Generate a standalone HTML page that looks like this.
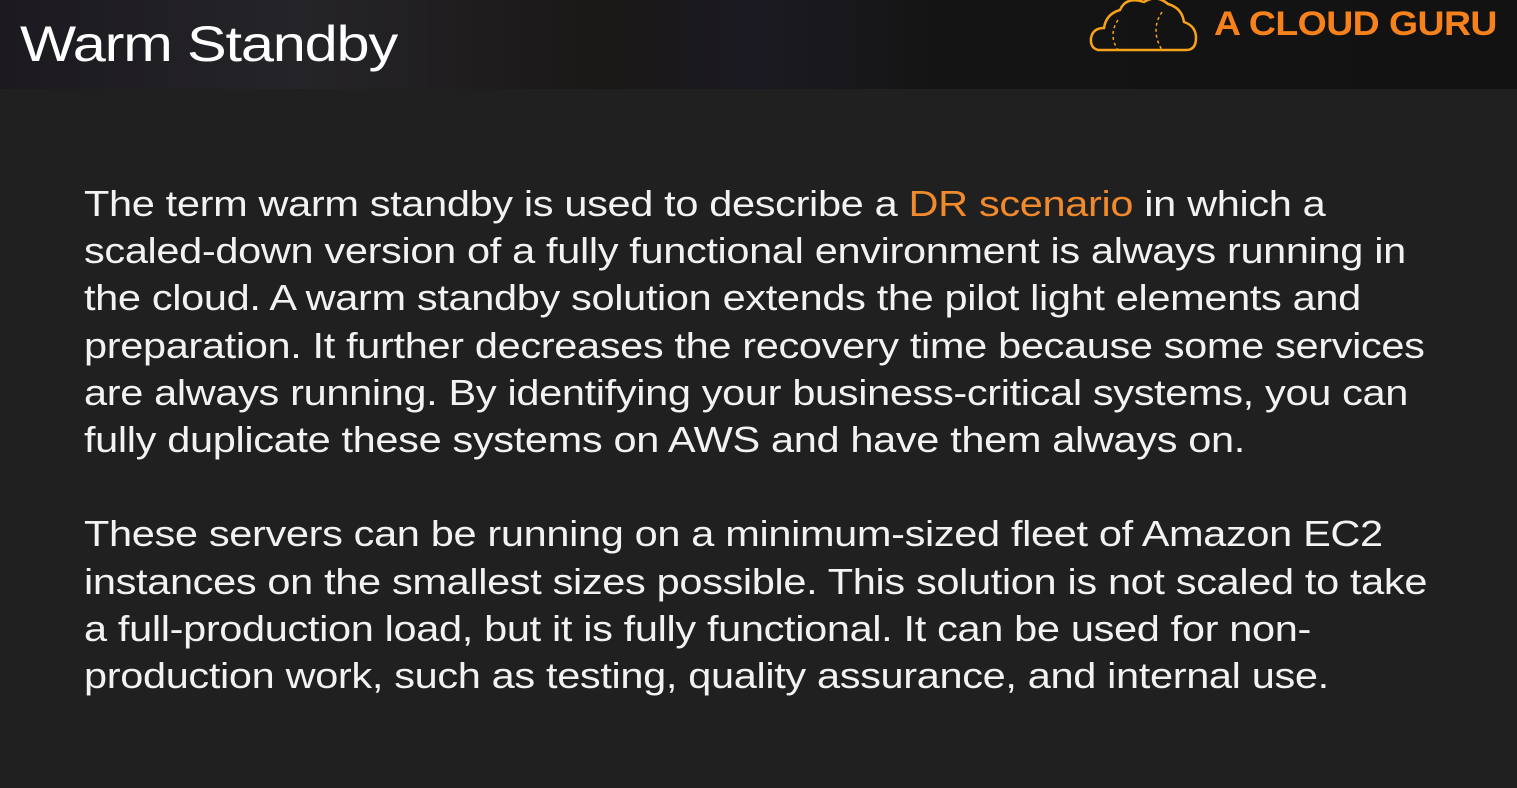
<!DOCTYPE html>
<html><head><style>
html,body{margin:0;padding:0}
body{width:1517px;height:788px;background:#202020;overflow:hidden;position:relative;font-family:"Liberation Sans",sans-serif}
.hdr{position:absolute;left:0;top:0;width:1517px;height:89px;background:linear-gradient(90deg,#1c1a20 0%,#252428 20%,#1a1716 40%,#1b1a22 50%,#151414 62%,#121212 100%)}
h1{position:absolute;left:20px;top:12px;margin:0;font-weight:normal;color:#fff;font-size:50px;letter-spacing:-1px;line-height:64px;transform:scaleX(1.19);transform-origin:0 0}
.logo{position:absolute;left:1214px;top:4px;color:#f7821b;font-weight:bold;font-size:34px;letter-spacing:-0.5px;line-height:40px;transform:scaleX(1.1);transform-origin:0 0}
.txt{position:absolute;left:84px;top:180px;color:#f2f2f2;font-size:36px;line-height:47.2px;white-space:nowrap;letter-spacing:-0.3px;transform:scaleX(1.153);transform-origin:0 0}
.or{color:#f08a2c}
</style></head><body>
<div class="hdr"></div>
<h1>Warm Standby</h1>
<svg style="position:absolute;left:1088px;top:0" width="112" height="56" viewBox="0 0 112 56">
<path d="M10 50 Q2 48 3 38 Q5 28 16 28 Q18 14 32 10 Q38 -4 56 2 Q68 -6 80 4 Q94 8 96 22 Q108 26 108 38 Q108 50 98 50 Z" fill="none" stroke="#f7a21b" stroke-width="2.5"/>
<path d="M30 20 Q20 35 30 50 M74 12 Q62 30 74 50" fill="none" stroke="#f7a21b" stroke-width="1.5" stroke-dasharray="3 3"/>
</svg>
<div class="logo">A CLOUD GURU</div>
<div class="txt">The term warm standby is used to describe a <span class="or">DR scenario</span> in which a<br>scaled-down version of a fully functional environment is always running in<br>the cloud. A warm standby solution extends the pilot light elements and<br>preparation. It further decreases the recovery time because some services<br>are always running. By identifying your business-critical systems, you can<br>fully duplicate these systems on AWS and have them always on.<br><br>These servers can be running on a minimum-sized fleet of Amazon EC2<br>instances on the smallest sizes possible. This solution is not scaled to take<br>a full-production load, but it is fully functional. It can be used for non-<br>production work, such as testing, quality assurance, and internal use.</div>
</body></html>
